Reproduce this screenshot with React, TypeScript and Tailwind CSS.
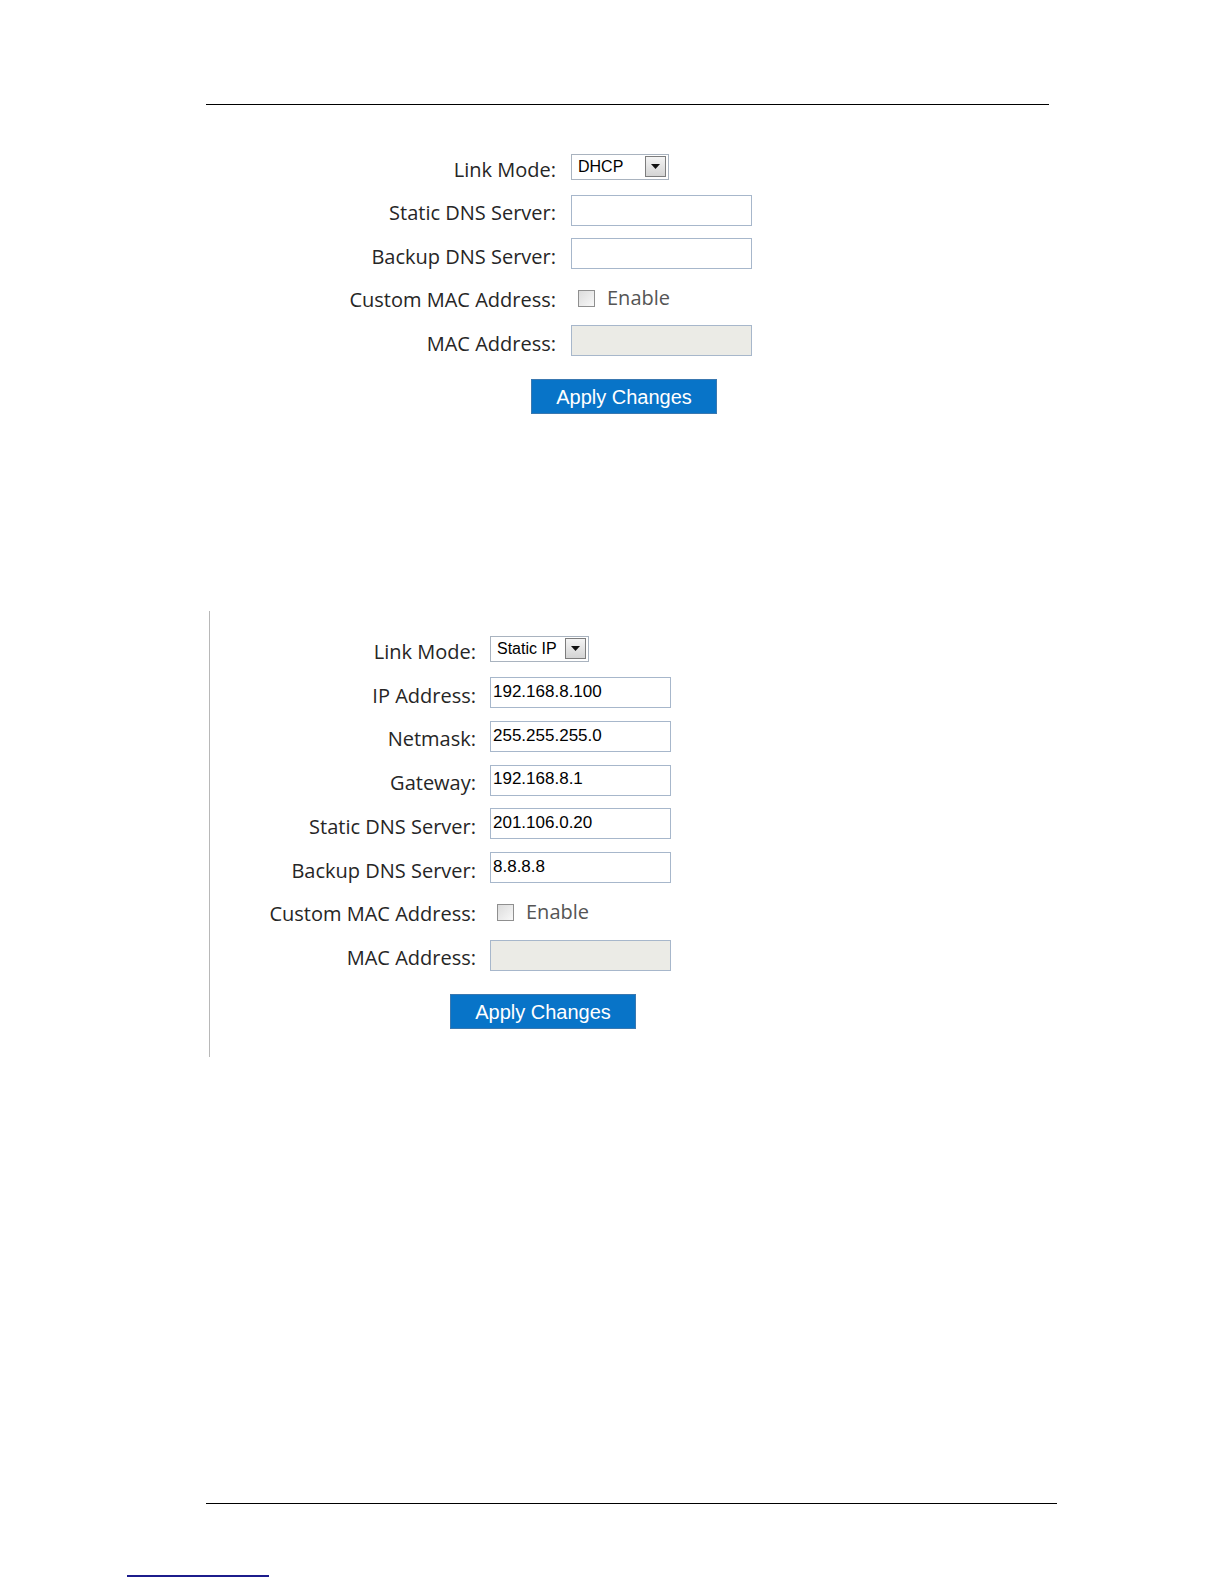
import React from 'react';

const labelFont = { fontFamily: '"Open Sans", "Noto Sans", sans-serif' };

const Select = ({ value, width }: { value: string; width: string }) => (
  <div className={`flex h-[26px] ${width} items-center border border-[#a9b3bf] bg-white pl-[6px] pr-[2px]`}>
    <span className="flex-1 font-['Liberation_Sans',Arial,sans-serif] text-[16px] leading-none text-black">{value}</span>
    <span className="flex h-[21px] w-[21px] items-center justify-center border border-[#7d7d7d] bg-gradient-to-b from-[#f4f4f4] to-[#d4d4d4]">
      <svg width="9" height="5" viewBox="0 0 9 5">
        <path d="M0 0h9L4.5 5z" fill="#111" />
      </svg>
    </span>
  </div>
);

const TextBox = ({ value = '', disabled = false }: { value?: string; disabled?: boolean }) => (
  <div
    className={`flex h-[31px] w-[181px] items-center border border-[#a7b7cb] pb-[2px] pl-[2px] font-['Liberation_Sans',Arial,sans-serif] text-[17px] text-black ${
      disabled ? 'bg-[#ebebe6]' : 'bg-white'
    }`}
  >
    {value}
  </div>
);

const CheckEnable = () => (
  <div className="flex items-center pl-[7px] pt-[2px]">
    <span className="h-[17px] w-[17px] border border-[#8f8f8f] bg-gradient-to-br from-[#dcdcdc] to-[#f8f8f8]" />
    <span className="ml-[12px] text-[20px] leading-none text-[#555]" style={labelFont}>
      Enable
    </span>
  </div>
);

type Row = { label: string; control: React.ReactNode };

const Form = ({ rows, gap, btnOffset, rowH }: { rows: Row[]; gap: string; btnOffset: string; rowH: string }) => (
  <div>
    {rows.map(r => (
      <div key={r.label} className={`flex ${rowH} items-center ${gap}`}>
        <div className="w-[266px] pt-[6px] text-right text-[20px] leading-none text-[#262626]" style={labelFont}>
          {r.label}
        </div>
        {r.control}
      </div>
    ))}
    <button
      className={`${btnOffset} flex h-[35px] w-[186px] items-center justify-center border border-[#3a78b0] bg-[#0874c8] font-['Liberation_Sans',Arial,sans-serif] text-[20px] text-white`}
    >
      Apply Changes
    </button>
  </div>
);

const App: React.FC = () => {
  const dhcpRows: Row[] = [
    { label: 'Link Mode:', control: <Select value="DHCP" width="w-[98px]" /> },
    { label: 'Static DNS Server:', control: <TextBox /> },
    { label: 'Backup DNS Server:', control: <TextBox /> },
    { label: 'Custom MAC Address:', control: <CheckEnable /> },
    { label: 'MAC Address:', control: <TextBox disabled /> },
  ];

  const staticRows: Row[] = [
    { label: 'Link Mode:', control: <Select value="Static IP" width="w-[99px]" /> },
    { label: 'IP Address:', control: <TextBox value="192.168.8.100" /> },
    { label: 'Netmask:', control: <TextBox value="255.255.255.0" /> },
    { label: 'Gateway:', control: <TextBox value="192.168.8.1" /> },
    { label: 'Static DNS Server:', control: <TextBox value="201.106.0.20" /> },
    { label: 'Backup DNS Server:', control: <TextBox value="8.8.8.8" /> },
    { label: 'Custom MAC Address:', control: <CheckEnable /> },
    { label: 'MAC Address:', control: <TextBox disabled /> },
  ];

  return (
    <div className="h-[1584px] w-[1224px] overflow-hidden bg-white">
      {/* top rule */}
      <div className="ml-[206px] mt-[104px] h-px w-[843px] bg-black" />

      {/* DHCP form */}
      <div className="ml-[290px] mt-[40px]">
        <Form rows={dhcpRows} gap="gap-[15px]" rowH="h-[43.5px]" btnOffset="ml-[241px] mt-[16.5px]" />
      </div>

      {/* Static IP form */}
      <div className="ml-[209px] mt-[197px] h-[446px] border-l border-[#b8b8b8] pt-[16px]">
        <Form rows={staticRows} gap="gap-[14px]" rowH="h-[43.75px]" btnOffset="ml-[240px] mt-[17px]" />
      </div>

      {/* bottom rule */}
      <div className="ml-[206px] mt-[446px] h-px w-[851px] bg-black" />
      <div className="ml-[127px] mt-[71px] h-[2px] w-[142px] bg-[#1c1c8c]" />
    </div>
  );
};

export default App;
